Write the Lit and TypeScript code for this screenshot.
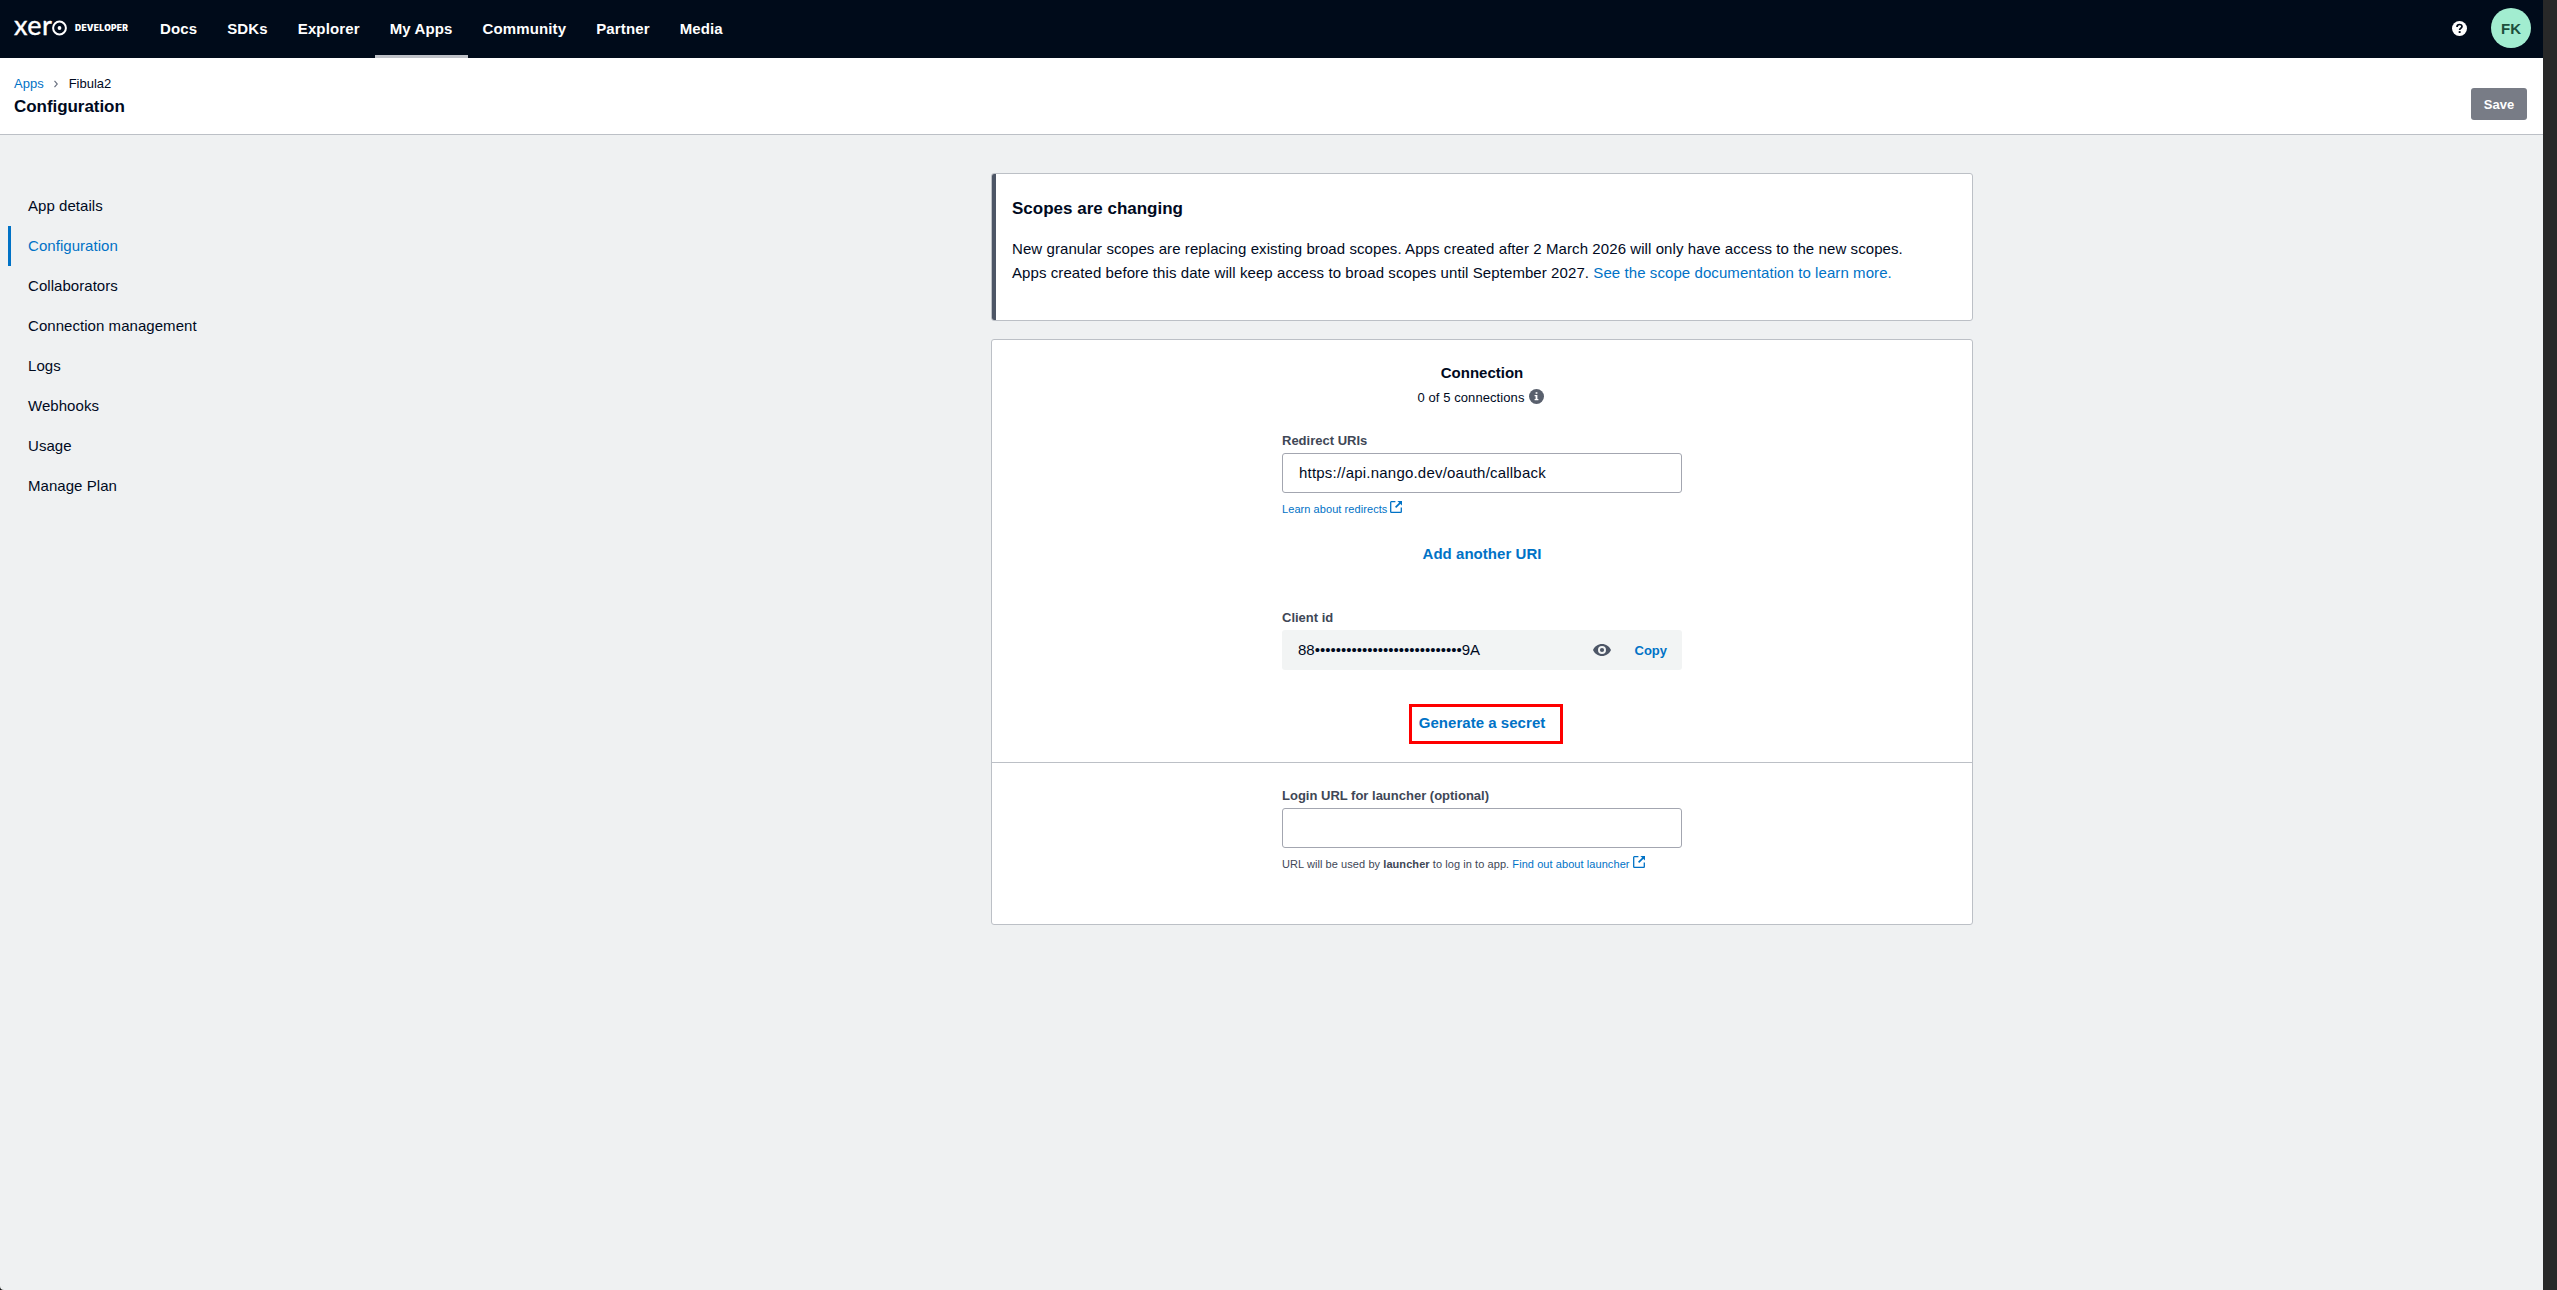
import { LitElement, html, css, svg } from "lit";
import { customElement, state } from "lit/decorators.js";
import { classMap } from "lit/directives/class-map.js";

const NAV = ["Docs", "SDKs", "Explorer", "My Apps", "Community", "Partner", "Media"];
const SIDE = [
  "App details",
  "Configuration",
  "Collaborators",
  "Connection management",
  "Logs",
  "Webhooks",
  "Usage",
  "Manage Plan",
];

const externalIcon = html`<svg class="ext" width="12" height="12" viewBox="0 0 12 12" aria-hidden="true">
  ${svg`<path d="M5.4 .7H1.3a.6.6 0 0 0-.6.6v9.4c0 .3.3.6.6.6h9.4c.3 0 .6-.3.6-.6V6.6" fill="none" stroke="currentColor" stroke-width="1.3"/>
  <path d="M5.6 6.4 10.2 1.8" stroke="currentColor" stroke-width="1.7"/>
  <path d="M7.4 0H12v4.6z" fill="currentColor"/>`}
</svg>`;

@customElement("app-root")
export class AppRoot extends LitElement {
  @state() private tab = "My Apps";
  @state() private section = "Configuration";

  static styles = css`
    :host {
      display: flex;
      width: 100%;
      height: 1290px;
      overflow: hidden;
      background: #161616;
      font-family: "Liberation Sans", Arial, sans-serif;
      font-size: 15px;
      line-height: 23px;
      color: #000a1e;
    }
    * { box-sizing: border-box; }
    a { color: #0072c6; text-decoration: none; }
    svg { display: block; flex: none; }
    .page {
      flex: 1;
      display: flex;
      flex-direction: column;
      background: #eff1f2;
      border-bottom-left-radius: 4px;
      overflow: hidden;
    }
    .edge { width: 14px; background: #282828; }
    .top {
      display: flex;
      height: 58px;
      padding: 0 12px 0 14px;
      background: #000b1a;
      color: #fff;
    }
    .brand { display: flex; width: 131px; height: 58px; }
    .word {
      font: 400 27px/34px Lato, sans-serif;
      padding-top: 8px;
      width: 38px;
      letter-spacing: 0.4px;
      white-space: nowrap;
      -webkit-text-stroke: 0.4px #fff;
    }
    .ring { margin: 20px 0 0 0; }
    .dev {
      font: 900 8.5px/10px Inter, sans-serif;
      letter-spacing: 0.25px;
      margin: 23px 0 0 8px;
    }
    .nav { display: flex; flex: 1; }
    .tab {
      height: 58px;
      padding: 17px 15px 0;
      font-weight: 700;
      letter-spacing: 0.13px;
      color: #fff;
      border-bottom: 3px solid transparent;
      white-space: nowrap;
    }
    .tab.on { border-bottom-color: #bfc2c8; }
    .help { margin: 21px 24px 0 0; }
    .avatar {
      width: 40px;
      height: 40px;
      margin-top: 8px;
      padding-top: 9px;
      border-radius: 50%;
      background: #a2edd0;
      color: #1d4f3c;
      font-weight: 700;
      text-align: center;
    }
    .sub {
      display: flex;
      justify-content: space-between;
      height: 77px;
      padding: 15px 16px 0 14px;
      background: #fff;
      border-bottom: 1px solid #bcc0c6;
    }
    .crumbs { display: flex; font-size: 13px; line-height: 21px; }
    .chev { margin: 7px 11px 0 10px; }
    .title { margin: 1px 0 0; font-size: 17px; line-height: 23px; font-weight: 700; letter-spacing: -0.05px; }
    .save {
      width: 56px;
      height: 32px;
      margin-top: 15px;
      padding: 0;
      border: 0;
      border-radius: 3px;
      background: #787c86;
      color: #fff;
      font: 700 13px/33px "Liberation Sans", Arial, sans-serif;
    }
    .body { display: flex; flex: 1; }
    .side { width: 300px; padding: 51px 0 0 8px; }
    .item {
      display: block;
      height: 40px;
      padding: 8px 0 0 17px;
      border-left: 3px solid transparent;
      color: #000a1e;
      letter-spacing: 0.05px;
    }
    .item.on { border-left-color: #0072c6; color: #0072c6; }
    .main { width: 982px; margin-left: 691px; padding-top: 38px; }
    .card { background: #fff; border: 1px solid #bcc0c6; border-radius: 3px; }
    .notice { display: flex; height: 148px; margin-bottom: 18px; overflow: hidden; }
    .bar { width: 4px; background: #4d5666; }
    .notetext { padding: 23px 0 0 16px; white-space: nowrap; }
    .h { margin: 0; font-size: 17px; line-height: 23px; font-weight: 700; }
    .p { margin: 17px 0 0; line-height: 24px; letter-spacing: 0.08px; }
    .conn { height: 586px; }
    .block { display: flex; flex-direction: column; align-items: center; }
    .first { height: 423px; padding-top: 21px; border-bottom: 1px solid #bcc0c6; }
    .second { padding-top: 22px; }
    .ch { margin: 0; font-size: 15px; line-height: 23px; font-weight: 700; }
    .count { display: flex; gap: 5px; margin: 3px 2px 0 0; font-size: 13px; line-height: 21px; letter-spacing: 0.08px; }
    .info { margin-top: 2px; }
    .field { width: 400px; }
    .redirect { margin-top: 22px; }
    .client { margin-top: 42px; }
    .label { display: block; margin-bottom: 2px; font-size: 13px; line-height: 21px; font-weight: 700; color: #404756; }
    .input {
      display: block;
      width: 400px;
      height: 40px;
      padding: 0 16px 1px;
      border: 1px solid #a3a6b0;
      border-radius: 3px;
      outline: none;
      background: #fff;
      color: #000a1e;
      font: 400 15px "Liberation Sans", Arial, sans-serif;
      letter-spacing: 0.21px;
    }
    .hint { display: flex; margin-top: 8px; font-size: 11px; line-height: 16px; letter-spacing: 0.07px; color: #404756; white-space: pre; }
    .ext { margin-left: 3px; color: #0072c6; }
    .action { font-weight: 700; letter-spacing: 0.04px; }
    .add { margin-top: 25px; }
    .secret {
      display: flex;
      height: 40px;
      padding: 0 15px 0 16px;
      border-radius: 3px;
      background: #f2f4f4;
    }
    .value { flex: 1; padding-top: 8px; }
    .eye { margin: 14px 24px 0 0; }
    .copy { padding-top: 10px; font-size: 13px; line-height: 21px; font-weight: 700; }
    .gen { position: relative; margin-top: 41px; }
    .mark {
      position: absolute;
      left: -10px;
      top: -7px;
      width: 154px;
      height: 40px;
      border: 3px solid #fe0000;
    }
  `;

  render() {
    return html`
      <div class="page">
        <header class="top">
          <div class="brand">
            <span class="word">xer</span>
            <svg class="ring" width="15" height="16" viewBox="0 0 15 16">
              <circle cx="7.5" cy="8" r="6.4" fill="none" stroke="#fff" stroke-width="2" />
              <circle cx="7.5" cy="8" r="1.9" fill="#fff" />
            </svg>
            <span class="dev">DEVELOPER</span>
          </div>
          <nav class="nav">
            ${NAV.map(
              (n) => html`<a class=${classMap({ tab: true, on: n === this.tab })} @click=${() => (this.tab = n)}>${n}</a>`
            )}
          </nav>
          <svg class="help" width="15" height="15" viewBox="0 0 15 15">
            <circle cx="7.5" cy="7.5" r="7.5" fill="#fff" />
            <path d="M5 5.900c0-1.600 1.100-2.400 2.500-2.400s2.500.8 2.500 2.100c0 1.600-2.400 1.700-2.400 3.400" fill="none" stroke="#000b1a" stroke-width="1.7" />
            <rect x="6.700" y="10.100" width="1.900" height="1.900" fill="#000b1a" />
          </svg>
          <div class="avatar">FK</div>
        </header>
        <div class="sub">
          <div>
            <div class="crumbs">
              <a>Apps</a>
              <svg class="chev" width="4" height="8" viewBox="0 0 4 8">
                <path d="M.5 .8 3.3 4 .5 7.2" fill="none" stroke="#6b7280" stroke-width="1.2" />
              </svg>
              <span>Fibula2</span>
            </div>
            <h1 class="title">Configuration</h1>
          </div>
          <button class="save">Save</button>
        </div>
        <div class="body">
          <nav class="side">
            ${SIDE.map(
              (s) =>
                html`<a class=${classMap({ item: true, on: s === this.section })} @click=${() => (this.section = s)}>${s}</a>`
            )}
          </nav>
          <main class="main">
            <section class="card notice">
              <div class="bar"></div>
              <div class="notetext">
                <h2 class="h">Scopes are changing</h2>
                <p class="p">
                  New granular scopes are replacing existing broad scopes. Apps created after 2 March 2026 will only have access to the new scopes.<br />
                  Apps created before this date will keep access to broad scopes until September 2027.
                  <a>See the scope documentation to learn more.</a>
                </p>
              </div>
            </section>
            <section class="card conn">
              <div class="block first">
                <h2 class="ch">Connection</h2>
                <div class="count">
                  <span>0 of 5 connections</span>
                  <svg class="info" width="15" height="15" viewBox="0 0 15 15">
                    <circle cx="7.5" cy="7.5" r="7.5" fill="#59606d" />
                    <path d="M6.6 3.2h1.8v1.6H6.6zM5.6 6h2.8v4h1v1.3H5.6V10h1V7.3h-1z" fill="#fff" />
                  </svg>
                </div>
                <div class="field redirect">
                  <label class="label">Redirect URIs</label>
                  <input class="input" .value=${"https://api.nango.dev/oauth/callback"} />
                  <div class="hint"><a>Learn about redirects</a>${externalIcon}</div>
                </div>
                <a class="action add">Add another URI</a>
                <div class="field client">
                  <span class="label">Client id</span>
                  <div class="secret">
                    <span class="value">88${"•".repeat(28)}9A</span>
                    <svg class="eye" width="18" height="12" viewBox="0 0 18 12">
                      <path
                        d="M9 0C5 0 1.6 2.5 0 6c1.6 3.500 5 6 9 6s7.400-2.500 9-6c-1.600-3.500-5-6-9-6zm0 10a4 4 0 1 1 0-8 4 4 0 0 1 0 8z"
                        fill="#4d5666"
                      />
                      <circle cx="9" cy="6" r="2.1" fill="#4d5666" />
                    </svg>
                    <a class="copy">Copy</a>
                  </div>
                </div>
                <a class="action gen">Generate a secret<span class="mark"></span></a>
              </div>
              <div class="block second">
                <div class="field">
                  <label class="label">Login URL for launcher (optional)</label>
                  <input class="input" />
                  <div class="hint"><span>URL will be used by <b>launcher</b> to log in to app. </span><a>Find out about launcher</a>${externalIcon}</div>
                </div>
              </div>
            </section>
          </main>
        </div>
      </div>
      <div class="edge"></div>
    `;
  }
}
